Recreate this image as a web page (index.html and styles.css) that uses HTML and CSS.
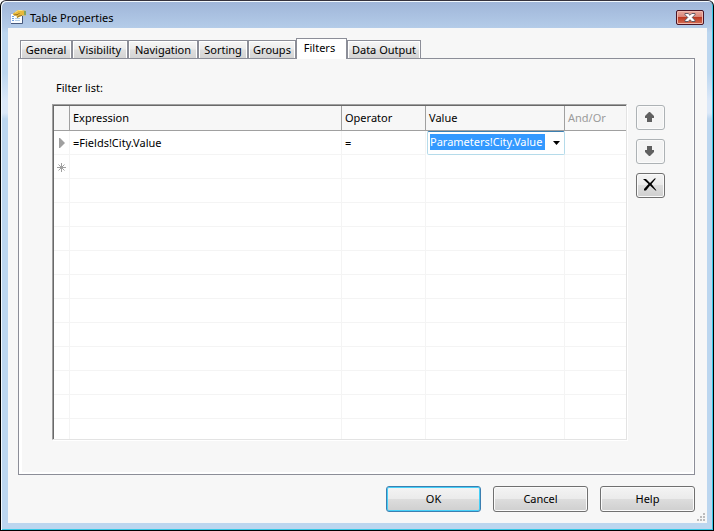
FILE: index.html
```html
<!DOCTYPE html>
<html lang="en">
<head>
<meta charset="utf-8">
<title>Table Properties</title>
<link rel="stylesheet" href="styles.css">
</head>
<body>
<div class="window" role="dialog" aria-labelledby="title">
  <header class="titlebar">
    <svg class="app-icon" width="16" height="16" viewBox="0 0 16 16" aria-hidden="true">
      <path d="M1 5h11v9H1z" fill="#fafdff"/>
      <path d="M.5 14V4.500H4" fill="none" stroke="#a3b4e0"/>
      <path d="M2 7.500h2M2 9.500h2M2 11.500h2" stroke="#6f9ddc"/>
      <path d="M5 9.500h5M5 11.500h5" stroke="#b4d0ea"/>
      <path d="M12.500 7v7.500H1" fill="none" stroke="#46587c"/>
      <path d="M3 4.500L8 1l4 .5h3l1 1v4h-4L9.500 8 7 9l-.5-2L3 6z" fill="#e8b93c"/>
      <path d="M5 3.500L8.500 1.500h4" fill="none" stroke="#f8df86"/>
      <path d="M4 6l4-.5 1.500-1.500M7 8.500l2-1.500 3-.5" fill="none" stroke="#8a6420" stroke-width=".9"/>
      <path d="M14 2h2v4h-2z" fill="#84a45c"/>
    </svg>
    <h1 class="title" id="title">Table Properties</h1>
    <button class="close" type="button" aria-label="Close">
      <svg width="12" height="9" viewBox="0 0 12 9" aria-hidden="true">
        <path d="M1 .5h3.200L6 2.300 7.800.5H11v1.200L8.200 4.500 11 7.300v1.200H7.800L6 6.700 4.200 8.500H1V7.300l2.800-2.800L1 1.700z" fill="#fff" stroke="#54505c" stroke-width=".9"/>
      </svg>
    </button>
  </header>

  <main class="client">
    <div class="tabs" role="tablist">
      <button class="tab" role="tab" type="button">General</button>
      <button class="tab" role="tab" type="button">Visibility</button>
      <button class="tab" role="tab" type="button">Navigation</button>
      <button class="tab" role="tab" type="button">Sorting</button>
      <button class="tab" role="tab" type="button">Groups</button>
      <button class="tab active" role="tab" type="button" aria-selected="true">Filters</button>
      <button class="tab" role="tab" type="button">Data Output</button>
    </div>

    <section class="panel" role="tabpanel">
      <h2 class="label" id="list-label">Filter list:</h2>
      <div class="editor">
        <div class="grid-frame">
          <table class="grid" aria-labelledby="list-label">
            <colgroup>
              <col class="col-mark"><col class="col-expression"><col class="col-operator"><col class="col-value"><col class="col-join">
            </colgroup>
            <thead>
              <tr><th></th><th>Expression</th><th>Operator</th><th>Value</th><th class="muted">And/Or</th></tr>
            </thead>
            <tbody>
              <tr>
                <td class="mark"><svg width="9" height="10" viewBox="0 0 9 10" aria-hidden="true"><path d="M2 0h1l5 5-5 5H2z" fill="#a0a0a0"/></svg></td>
                <td>=Fields!City.Value</td>
                <td>=</td>
                <td class="editing">
                  <div class="combo">
                    <input class="combo-text" type="text" aria-label="Value" value="Parameters!City.Value">
                    <button class="combo-arrow" type="button" aria-label="Open list">
                      <svg width="7" height="4" viewBox="0 0 7 4" aria-hidden="true"><path d="M0 0h7L3.500 4z" fill="#000"/></svg>
                    </button>
                  </div>
                </td>
                <td></td>
              </tr>
              <tr>
                <td class="mark"><svg width="9" height="10" viewBox="0 0 9 10" aria-hidden="true"><path d="M4.500 1v9M0 5.500h9M1.500 2.500l6 6M7.500 2.500l-6 6" stroke="#a0a0a0"/></svg></td>
                <td></td><td></td><td></td><td></td>
              </tr>
              <tr><td></td><td></td><td></td><td></td><td></td></tr>
              <tr><td></td><td></td><td></td><td></td><td></td></tr>
              <tr><td></td><td></td><td></td><td></td><td></td></tr>
              <tr><td></td><td></td><td></td><td></td><td></td></tr>
              <tr><td></td><td></td><td></td><td></td><td></td></tr>
              <tr><td></td><td></td><td></td><td></td><td></td></tr>
              <tr><td></td><td></td><td></td><td></td><td></td></tr>
              <tr><td></td><td></td><td></td><td></td><td></td></tr>
              <tr><td></td><td></td><td></td><td></td><td></td></tr>
              <tr><td></td><td></td><td></td><td></td><td></td></tr>
              <tr><td></td><td></td><td></td><td></td><td></td></tr>
            </tbody>
          </table>
        </div>
        <div class="tools">
          <button class="tool" type="button" aria-label="Move up" disabled>
            <svg width="9" height="10" viewBox="0 0 9 10" aria-hidden="true"><path d="M4 0h1l4 4v2H7v4H2V6H0V4z" fill="#606060"/></svg>
          </button>
          <button class="tool" type="button" aria-label="Move down" disabled>
            <svg width="9" height="10" viewBox="0 0 9 10" aria-hidden="true"><path d="M4 10h1l4-4V4H7V0H2v4H0v2z" fill="#606060"/></svg>
          </button>
          <button class="tool" type="button" aria-label="Delete">
            <svg width="14" height="13" viewBox="0 0 14 13" aria-hidden="true"><path d="M0 1h3l4 4 4.500-4.500H13L8.500 6l5 6.500h-1L7 7.500l-4 5H1V11l4.500-5z" fill="#000"/></svg>
          </button>
        </div>
      </div>
    </section>

    <footer class="actions">
      <button class="button default" type="submit">OK</button>
      <button class="button" type="button">Cancel</button>
      <button class="button" type="button">Help</button>
    </footer>
    <svg class="grip" width="8" height="8" viewBox="0 0 8 8" aria-hidden="true">
      <path d="M6 0h2v2H6zM3 3h2v2H3zM6 3h2v2H6zM0 6h2v2H0zM3 6h2v2H3zM6 6h2v2H6z" fill="#bcbcbc"/>
    </svg>
  </main>
</div>
</body>
</html>
```

FILE: styles.css
```css
* {
  box-sizing: border-box;
}

body {
  margin: 0;
  background: #fff;
  color: #000;
  font: 11px/16px "Noto Sans", "Open Sans", sans-serif;
}

button,
input {
  margin: 0;
  padding: 0;
  color: inherit;
  font: inherit;
}

svg {
  display: block;
}

.window {
  display: flex;
  flex-direction: column;
  height: 100vh;
  padding: 1px 6px 7px;
  border: 1px solid #000;
  border-top-color: #35323c;
  border-radius: 6px 6px 0 0;
  background: linear-gradient(#9fb5d8, #b3cbe8 26px, #bcd6ef 32px, #bcd6ef 72px, #dbe8f8 100px, #dbe8f8 112px, #bcd6ef 118px);
  box-shadow: inset 1px 1px #f2f8fd, inset -1px -1px #35c8e6;
}

.titlebar {
  display: flex;
  align-items: center;
  gap: 4px;
  height: 26px;
  padding: 0 3px;
}

.title {
  flex: 1;
  margin: 0;
  padding-top: 6px;
  font-size: 11px;
  font-weight: 400;
}

.app-icon {
  margin-top: 4px;
}

.close {
  display: grid;
  place-items: center;
  width: 28px;
  height: 15px;
  margin-top: 4px;
  border: 1px solid #4b1424;
  border-radius: 2px;
  background: linear-gradient(#e9a99c, #d98578 45%, #bd3a22 50%, #d36d55);
  box-shadow: inset 0 0 0 1px #efb9ae;
}

.client {
  position: relative;
  display: flex;
  flex: 1;
  flex-direction: column;
  min-height: 0;
  margin: 0 0 0 1px;
  padding: 10px 12px 11px 10px;
  background: #f7f7f7;
}

.tabs {
  display: grid;
  grid-template-columns: 52px 56px 70px 50px 48px 51px 74px;
  align-items: end;
  height: 20px;
  padding-left: 2px;
}

.tab {
  height: 18px;
  overflow: hidden;
  border: 1px solid #8c8e98;
  border-bottom: 0;
  background: linear-gradient(#f6f6f6, #ececec 45%, #dedede 55%, #d4d4d4);
  box-shadow: inset 1px 1px #fff, inset -1px 0 #fff;
  line-height: 16px;
  white-space: nowrap;
}

.tab.active {
  z-index: 1;
  height: 21px;
  margin-bottom: -1px;
  padding: 0 4px 2px 0;
  background: #fff;
}

.panel {
  display: flex;
  flex: 1;
  flex-direction: column;
  min-height: 0;
  padding: 18px 25px 31px 30px;
  border: 1px solid #8c8e98;
  box-shadow: inset 3px 0 #fff, inset -1px -2px #fff;
}

.label {
  margin: 0;
  padding: 3px 7px;
  font-size: 11px;
  font-weight: 400;
}

.editor {
  display: flex;
  flex: 1;
  gap: 9px;
  min-height: 0;
  margin: 5px 4px 3px 3px;
}

.grid-frame {
  flex: 1;
  overflow: hidden;
  border: 1px solid #a0a0a0;
  border-right-color: #e3e3e3;
  border-bottom-color: #e3e3e3;
  background: #fff;
  box-shadow: 1px 1px #fff;
}

.grid {
  width: 100%;
  border-top: 1px solid #696969;
  border-left: 1px solid #696969;
  border-spacing: 0;
  table-layout: fixed;
}

.col-mark {
  width: 16px;
}

.col-expression {
  width: 272px;
}

.col-operator {
  width: 84px;
}

.col-value {
  width: 139px;
}

.grid th,
.grid td {
  height: 24px;
  padding: 0 3px;
  border-right: 1px solid #f4f4f4;
  border-bottom: 1px solid #f4f4f4;
  text-align: left;
  white-space: nowrap;
}

.grid th {
  height: 25px;
  border-color: #a0a0a0;
  background: #f7f7f7;
  font-weight: 400;
}

.grid th:last-child,
.grid td:last-child {
  border-right: 0;
}

.grid .muted {
  color: #9b9b9b;
}

.grid .mark {
  padding: 1px 0 0;
}

.mark svg {
  margin: 0 auto;
}

.grid .editing {
  padding: 0 0 0 1px;
  border: 0;
}

.combo {
  display: flex;
  align-items: center;
  height: 24px;
  padding-left: 2px;
  border: 1px solid #b5dbea;
  border-top-color: #3c7fb1;
  border-radius: 2px;
}

.combo-text {
  flex: 1;
  min-width: 0;
  height: 16px;
  margin-bottom: 2px;
  border: 0;
  background: #3399ff;
  color: #fff;
}

.combo-arrow {
  display: grid;
  place-items: center;
  width: 19px;
  height: 22px;
  padding-left: 3px;
  border: 0;
  background: none;
}

.tools {
  display: flex;
  flex-direction: column;
  gap: 9px;
  padding-top: 1px;
}

.tool,
.button {
  display: grid;
  place-items: center;
  border: 1px solid #707070;
  border-radius: 3px;
  background: linear-gradient(#f4f4f4, #ebebeb 48%, #dddddd 50%, #cfcfcf);
  box-shadow: inset 0 0 0 1px #fbfbfb;
}

.tool {
  width: 29px;
  height: 25px;
  padding: 0 2px 2px 0;
}

.tool:disabled {
  border-color: #adb2b5;
  background: #f4f4f4;
}

.actions {
  display: flex;
  justify-content: flex-end;
  gap: 12px;
  padding-top: 11px;
}

.button {
  width: 95px;
  height: 26px;
}

.button.default {
  border-color: #3c7fb1;
  box-shadow: inset 0 0 0 1px #46d0f8;
}

.grip {
  position: absolute;
  right: 2px;
  bottom: 2px;
}
```
